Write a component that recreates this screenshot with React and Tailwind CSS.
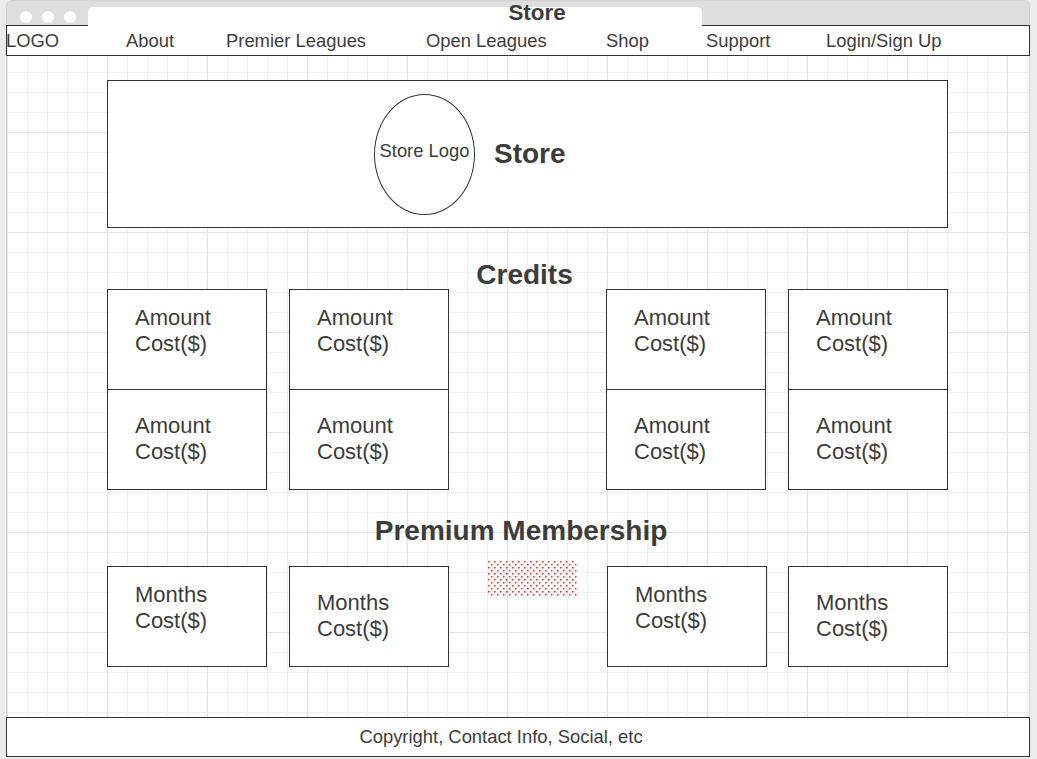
const navItems = [
  { label: 'LOGO', w: 'w-[120px] -ml-px' },
  { label: 'About', w: 'w-[100px]' },
  { label: 'Premier Leagues', w: 'w-[200px]' },
  { label: 'Open Leagues', w: 'w-[180px]' },
  { label: 'Shop', w: 'w-[100px]' },
  { label: 'Support', w: 'w-[120px]' },
  { label: 'Login/Sign Up', w: 'flex-1' },
];

const TwoLines = ({ top, bottom }) => (
  <div className="text-[22px] leading-[26px]">
    <div>{top}</div>
    <div>{bottom}</div>
  </div>
);

// one credits column: two stacked cells sharing a border
const CreditColumn = () => (
  <div className="w-[160px] h-[201px] border border-[#333] bg-white flex flex-col">
    <div className="h-[100px] border-b border-[#333] pl-[27px] pt-[15px]">
      <TwoLines top="Amount" bottom="Cost($)" />
    </div>
    <div className="flex-1 pl-[27px] pt-[23px]">
      <TwoLines top="Amount" bottom="Cost($)" />
    </div>
  </div>
);

const MemberBox = ({ centered }) => (
  <div
    className={
      'w-[160px] h-[101px] border border-[#333] bg-white pl-[27px] ' +
      (centered ? 'pt-[23px]' : 'pt-[15px]')
    }
  >
    <TwoLines top="Months" bottom="Cost($)" />
  </div>
);

// red dot fill, staggered rows 3px apart
const dots = [];
for (let r = 0; r < 12; r++) {
  for (let c = 0; c < 15; c++) {
    const x = c * 6 + (r % 2 ? 3 : 0);
    if (x < 89) dots.push([x, r * 3]);
  }
}

const Dotted = () => (
  <svg width="90" height="36" className="absolute left-[481px] top-[505px]">
    {dots.map(([x, y], i) => (
      <rect key={i} x={x} y={y} width="1.5" height="1.5" fill="#ff2020" />
    ))}
  </svg>
);

export default function App() {
  return (
    <div className="w-[1037px] h-[759px] bg-[#ebebeb] overflow-hidden font-['Liberation_Sans',Arial,sans-serif] text-[#3c3c3c]">
      <div className="ml-[6px] w-[1024px]">
        {/* window title bar */}
        <div className="relative h-[25px] bg-[#dedede] rounded-t-[6px] border-t border-x border-[#d2d2d2]">
          <div className="absolute left-[13px] top-[10px] flex gap-[10px]">
            <span className="w-[12px] h-[12px] rounded-full bg-white" />
            <span className="w-[12px] h-[12px] rounded-full bg-white" />
            <span className="w-[12px] h-[12px] rounded-full bg-white" />
          </div>
          <div className="absolute left-[81px] top-[6px] w-[614px] h-[19px] bg-white rounded-t-[5px]" />
          <div className="absolute left-0 right-0 top-[-1px] text-center font-bold text-[22.4px] leading-[26px] pl-[38px]">
            Store
          </div>
        </div>

        {/* nav */}
        <div className="h-[31px] border border-[#333] bg-white flex items-center text-[18.4px]">
          {navItems.map((n) => (
            <div key={n.label} className={n.w + ' leading-[20px]'}>
              {n.label}
            </div>
          ))}
        </div>

        {/* canvas */}
        <div className="relative h-[661px] border-x border-[#d6d6d6] bg-white bg-[linear-gradient(to_right,#e2e2e2_1px,transparent_1px),linear-gradient(to_bottom,#e2e2e2_1px,transparent_1px),linear-gradient(to_right,#efefef_1px,transparent_1px),linear-gradient(to_bottom,#efefef_1px,transparent_1px)] bg-[size:100px_100px,100px_100px,20px_20px,20px_20px] bg-[position:0_76px,0_76px,0_16px,0_16px]">
          <div className="ml-[100px] w-[841px] pt-[24px]">
            <div className="h-[148px] border border-[#333] bg-white flex items-center pl-[266px] gap-[20px]">
              <div className="w-[101px] h-[121px] rounded-[50%] border border-[#333] flex items-center justify-center text-[18.4px] leading-[20px] pb-[6px] whitespace-nowrap">
                Store Logo
              </div>
              <div className="font-bold text-[28px] leading-[32px] -ml-px">Store</div>
            </div>

            <div className="mt-[33px] h-[28px] leading-[28px] text-[28px] font-bold text-center pr-[6px]">
              Credits
            </div>
            <div className="flex">
              <CreditColumn />
              <div className="w-[22px]" />
              <CreditColumn />
              <div className="w-[157px]" />
              <CreditColumn />
              <div className="w-[22px]" />
              <CreditColumn />
            </div>

            <div className="mt-[27px] h-[28px] leading-[28px] text-[28px] font-bold text-center pr-[13px]">
              Premium Membership
            </div>
            <div className="mt-[21px] flex">
              <MemberBox />
              <div className="w-[22px]" />
              <MemberBox centered />
              <div className="w-[158px]" />
              <MemberBox />
              <div className="w-[21px]" />
              <MemberBox centered />
            </div>
          </div>
          <Dotted />
        </div>

        {/* footer */}
        <div className="h-[40px] border border-[#333] bg-white flex items-center justify-center pr-[34px] text-[18.4px]">
          Copyright, Contact Info, Social, etc
        </div>
      </div>
    </div>
  );
}
